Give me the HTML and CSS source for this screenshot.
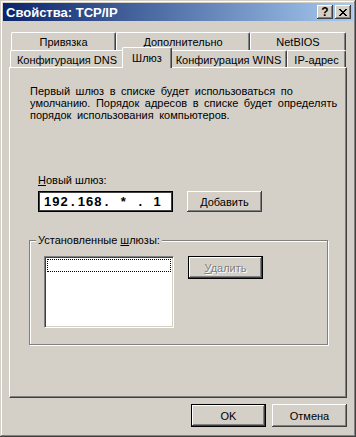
FILE: index.html
```html
<!doctype html>
<html>

<head>
    <title>Свойства: TCP/IP</title>
    <link rel="stylesheet" href="styles.css">
</head>

<body>
    <div class="window">
        <div class="titlebar">
            <span class="title">Свойства: TCP/IP</span>
            <div class="tbBtn help">?</div>
            <div class="tbBtn close">
                <svg width="8" height="7" viewBox="0 0 8 7" shape-rendering="crispEdges">
                    <path d="M0 0h2v1h-2zM6 0h2v1h-2zM1 1h2v1h-2zM5 1h2v1h-2zM2 2h4v1h-4zM3 3h2v1h-2zM2 4h4v1h-4zM1 5h2v1h-2zM5 5h2v1h-2zM0 6h2v1h-2zM6 6h2v1h-2z" fill="#000"/>
                </svg>
            </div>
        </div>

        <!-- Tab strip, two rows -->
        <div class="tabs">
            <div class="tabRow rowTop">
                <div class="tab" style="width:105px">Привязка</div>
                <div class="tab" style="width:134px">Дополнительно</div>
                <div class="tab" style="width:96px">NetBIOS</div>
            </div>
            <div class="tabRow rowBottom">
                <div class="tab" style="width:114px">Конфигурация DNS</div>
                <div class="tab active" style="width:50px">Шлюз</div>
                <div class="tab" style="width:117px">Конфигурация WINS</div>
                <div class="tab" style="width:59px">IP-адрес</div>
            </div>
        </div>

        <div class="panel">
            <p class="desc">Первый шлюз в списке будет использоваться по<br>умолчанию. Порядок адресов в списке будет определять<br>порядок использования компьютеров.</p>

            <div class="label"><u>Н</u>овый шлюз:</div>
            <div class="gwRow">
                <div class="ipBox">
                    <span class="ipField">192</span>
                    <span class="ipDot">.</span>
                    <span class="ipField">168</span>
                    <span class="ipDot">.</span>
                    <span class="ipField">*</span>
                    <span class="ipDot">.</span>
                    <span class="ipField">1</span>
                </div>
                <div class="btn addBtn"><u>Д</u>обавить</div>
            </div>

            <div class="group">
                <span class="legend">Установленные <u>ш</u>люзы:</span>
                <div class="listBox">
                    <div class="focusRow"></div>
                </div>
                <div class="btn default disabled delBtn"><span><u>У</u>далить</span></div>
            </div>
        </div>

        <div class="footer">
            <div class="btn default">OK</div>
            <div class="btn">Отмена</div>
        </div>
    </div>
</body>
</html>
```

FILE: styles.css
```css
* {
    box-sizing: border-box;
}

body {
    margin: 0;
    background: #d4d0c8;
    font-family: "Liberation Sans", Arial, sans-serif;
    font-size: 11px;
    color: #000;
}

/* Window frame */
.window {
    width: 356px;
    height: 437px;
    padding: 3px;
    background: #d4d0c8;
    box-shadow: inset -1px -1px #404040, inset 1px 1px #d4d0c8, inset -2px -2px #808080, inset 2px 2px #fff;
}

/* Title bar */
.titlebar {
    height: 18px;
    display: flex;
    align-items: center;
    gap: 2px;
    padding: 0 2px 0 3px;
    background: linear-gradient(to right, #0a246a, #a6caf0);
    color: #fff;
    font-weight: bold;
    font-size: 13px;
}

.titlebar .title {
    flex: 1;
}

.tbBtn {
    width: 16px;
    height: 14px;
    display: flex;
    align-items: center;
    justify-content: center;
    background: #d4d0c8;
    color: #000;
    box-shadow: inset -1px -1px #404040, inset 1px 1px #fff, inset -2px -2px #808080, inset 2px 2px #d4d0c8;
}

.tbBtn.help {
    font-size: 12px;
    font-weight: bold;
    padding-bottom: 1px;
}

.tbBtn.close svg {
    margin-left: -1px;
}

/* Tabs */
.tabs {
    margin-top: 11px;
}

.tabRow {
    display: flex;
}

.rowTop {
    padding-left: 8px;
    height: 18px;
}

.rowBottom {
    padding-left: 7px;
    height: 17px;
}

.tab {
    height: 100%;
    display: flex;
    justify-content: center;
    padding-top: 3px;
    border-top: 1px solid #fff;
    border-left: 1px solid #fff;
    border-right: 1px solid #404040;
    border-radius: 2px 2px 0 0;
    box-shadow: inset -1px 0 #808080;
    white-space: nowrap;
}

.tab.active {
    position: relative;
    z-index: 1;
    height: 21px;
    margin: -3px -2px 0;
    padding-top: 4px;
    background: #d4d0c8;
}

/* Tab page */
.panel {
    width: 338px;
    height: 331px;
    margin-left: 6px;
    padding: 1px;
    border-top: 1px solid #fff;
    border-left: 1px solid #fff;
    border-right: 1px solid #404040;
    border-bottom: 1px solid #404040;
    box-shadow: inset -1px -1px #808080;
}

.desc {
    margin: 16px 0 0 19px;
    line-height: 12px;
    word-spacing: 2.5px;
}

.label {
    margin: 53px 0 0 27px;
    line-height: 12px;
}

.gwRow {
    display: flex;
    gap: 14px;
    margin: 5px 0 0 27px;
}

/* IP address control: four centred fields */
.ipBox {
    width: 135px;
    height: 21px;
    display: flex;
    align-items: center;
    padding-left: 2px;
    background: #fff;
    font-size: 13px;
    font-weight: bold;
    border: 1px solid #000;
    box-shadow: inset 0 0 0 1px #404040;
}

.ipField {
    width: 30px;
    flex-shrink: 1;
    text-align: center;
    letter-spacing: 1px;
    padding-left: 1px;
}

.ipDot {
    width: 4px;
    flex-shrink: 0;
    text-align: center;
}

/* Buttons */
.btn {
    width: 75px;
    height: 23px;
    display: flex;
    align-items: center;
    justify-content: center;
    background: #d4d0c8;
    box-shadow: inset -1px -1px #404040, inset 1px 1px #fff, inset -2px -2px #808080, inset 2px 2px #d4d0c8;
}

.btn.default {
    border: 1px solid #000;
    box-shadow: inset -1px -1px #404040, inset 1px 1px #fff, inset -2px -2px #808080;
}

.btn.disabled {
    color: #808080;
    text-shadow: 1px 1px #fff;
}

.addBtn {
    height: 21px;
}

/* Group box */
.group {
    position: relative;
    display: flex;
    gap: 14px;
    width: 299px;
    height: 105px;
    margin: 28px 0 0 18px;
    padding: 15px 0 0 14px;
    border: 1px solid #808080;
    box-shadow: inset 1px 1px #fff, 1px 1px #fff;
}

.legend {
    position: absolute;
    top: -7px;
    left: 6px;
    padding: 0 2px 0 2px;
    background: #d4d0c8;
    line-height: 12px;
}

.listBox {
    width: 130px;
    height: 72px;
    padding: 2px 2px 0 2px;
    background: #fff;
    border: 1px solid #808080;
    border-right-color: #fff;
    border-bottom-color: #fff;
    box-shadow: inset 1px 1px #404040, inset -1px -1px #d4d0c8;
}

.focusRow {
    height: 13px;
    border: 1px dotted #000;
}

/* Dialog buttons */
.footer {
    display: flex;
    justify-content: flex-end;
    gap: 6px;
    margin-top: 6px;
    padding-right: 6px;
}
```
